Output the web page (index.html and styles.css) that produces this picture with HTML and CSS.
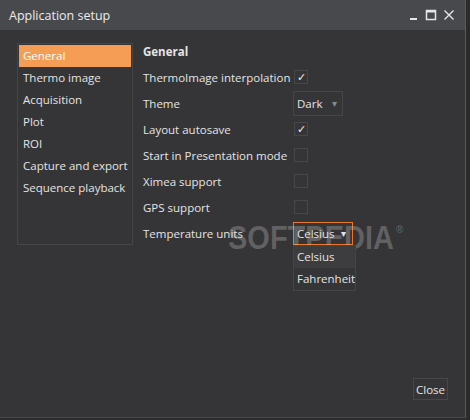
FILE: index.html
```html
<!DOCTYPE html>
<html>
<head>
    <meta charset="utf-8">
    <link rel="stylesheet" href="styles.css">
</head>
<body>

<div class="window">
    <div class="titlebar">
        <span class="title">Application setup</span>
        <div class="win_btns">
            <svg width="10" height="12" viewBox="0 0 10 12"><rect x="1" y="9" width="7" height="2" fill="#e6e6e6"/></svg>
            <svg width="12" height="12" viewBox="0 0 12 12"><rect x="1.5" y="1.5" width="9" height="9" fill="none" stroke="#e6e6e6" stroke-width="1.5"/><rect x="1" y="1" width="10" height="2.5" fill="#e6e6e6"/></svg>
            <svg width="12" height="12" viewBox="0 0 12 12"><path d="M1.5 1.5 L10.5 10.5 M10.5 1.5 L1.5 10.5" stroke="#e6e6e6" stroke-width="1.4"/></svg>
        </div>
    </div>

    <div class="content">
        <div class="main">
            <ul class="nav">
                <li class="selected">General</li>
                <li>Thermo image</li>
                <li>Acquisition</li>
                <li>Plot</li>
                <li>ROI</li>
                <li>Capture and export</li>
                <li>Sequence playback</li>
            </ul>

            <div class="settings">
                <div class="heading">General</div>
                <div class="row">
                    <span class="label">ThermoImage interpolation</span>
                    <span class="check on">&#10003;</span>
                </div>
                <div class="row">
                    <span class="label">Theme</span>
                    <span class="combo theme">Dark <span class="arrow dim">&#9662;</span></span>
                </div>
                <div class="row">
                    <span class="label">Layout autosave</span>
                    <span class="check on">&#10003;</span>
                </div>
                <div class="row">
                    <span class="label">Start in Presentation mode</span>
                    <span class="check"></span>
                </div>
                <div class="row">
                    <span class="label">Ximea support</span>
                    <span class="check"></span>
                </div>
                <div class="row">
                    <span class="label">GPS support</span>
                    <span class="check"></span>
                </div>
                <div class="row">
                    <span class="label">Temperature units</span>
                    <div class="combo_wrap">
                        <span class="combo active">Celsius <span class="arrow">&#9662;</span></span>
                        <ul class="dropdown">
                            <li class="hover">Celsius</li>
                            <li>Fahrenheit</li>
                        </ul>
                    </div>
                </div>
                <div class="watermark">SOFTPEDIA<sup>&reg;</sup></div>
            </div>
        </div>

        <div class="footer">
            <button type="button" class="close_btn">Close</button>
        </div>
    </div>
</div>

</body>
</html>
```

FILE: styles.css
```css
body {
    margin: 0;
    background: #2b2b2d;
    font-family: "Open Sans", "Noto Sans", sans-serif;
    font-size: 11.5px;
    color: #e4e4e4;
}

.window {
    width: 465px;
    height: 417px;
    background: #353537;
    border-right: 1px solid #5a5a5e;
    border-bottom: 1px solid #47474a;
    display: flex;
    flex-direction: column;
}

.titlebar {
    height: 30px;
    background: #48494d;
    display: flex;
    align-items: center;
    justify-content: space-between;
    padding: 0 10px 0 9px;
}

.title {
    font-size: 12.5px;
    color: #ececec;
}

.win_btns {
    display: flex;
    gap: 6px;
    align-items: center;
}

.content {
    flex: 1;
    display: flex;
    flex-direction: column;
    padding: 13px 16px 17px 17px;
}

.main {
    flex: 1;
    display: flex;
    align-items: flex-start;
}

.nav {
    list-style: none;
    margin: 0;
    padding: 1px;
    width: 112px;
    height: 198px;
    border: 1px solid #454548;
}

.nav li {
    height: 22px;
    line-height: 22px;
    padding-left: 4px;
    white-space: nowrap;
}

.nav li.selected {
    background: #f59d55;
    color: #fff;
}

.settings {
    position: relative;
    margin-left: 10px;
}

.heading {
    font-weight: 700;
    height: 21px;
    line-height: 18px;
}

.row {
    display: flex;
    align-items: center;
    height: 26px;
}

.label {
    width: 150px;
    white-space: nowrap;
}

.check {
    width: 12px;
    height: 12px;
    border: 1px solid #474749;
    margin-left: 1px;
    font-size: 11px;
    line-height: 12px;
    text-align: center;
    color: #f0f0f0;
}

.combo {
    display: inline-flex;
    align-items: center;
    height: 23px;
    padding: 0 5px 0 3px;
    border: 1px solid #454548;
}

.combo.theme {
    width: 40px;
    justify-content: space-between;
}

.arrow {
    font-size: 10px;
    margin-left: 6px;
}

.arrow.dim {
    color: #8a8a8c;
}

.combo_wrap {
    position: relative;
}

.combo.active {
    border: 1px solid #e8792a;
    height: 21px;
    padding-right: 6px;
}

.dropdown {
    position: absolute;
    top: 23px;
    left: 0;
    width: 61px;
    list-style: none;
    margin: 0;
    padding: 0;
    border: 1px solid #444446;
    background: #353537;
    z-index: 2;
}

.dropdown li {
    height: 22px;
    line-height: 22px;
    padding-left: 3px;
}

.dropdown li.hover {
    background: #3d3d40;
}

.watermark {
    position: absolute;
    left: 85px;
    top: 176px;
    font-family: "Liberation Sans", sans-serif;
    font-weight: 700;
    font-size: 29px;
    color: rgba(210, 210, 210, 0.28);
    transform: scaleY(1.15);
    transform-origin: left top;
    pointer-events: none;
}

.watermark sup {
    font-size: 10px;
    vertical-align: 14px;
    margin-left: 2px;
}

.footer {
    display: flex;
    justify-content: flex-end;
}

.close_btn {
    font-family: inherit;
    font-size: 11.5px;
    color: #e4e4e4;
    background: #353537;
    border: 1px solid #474749;
    padding: 0 2px;
    height: 22px;
    margin-right: 1px;
}
```
